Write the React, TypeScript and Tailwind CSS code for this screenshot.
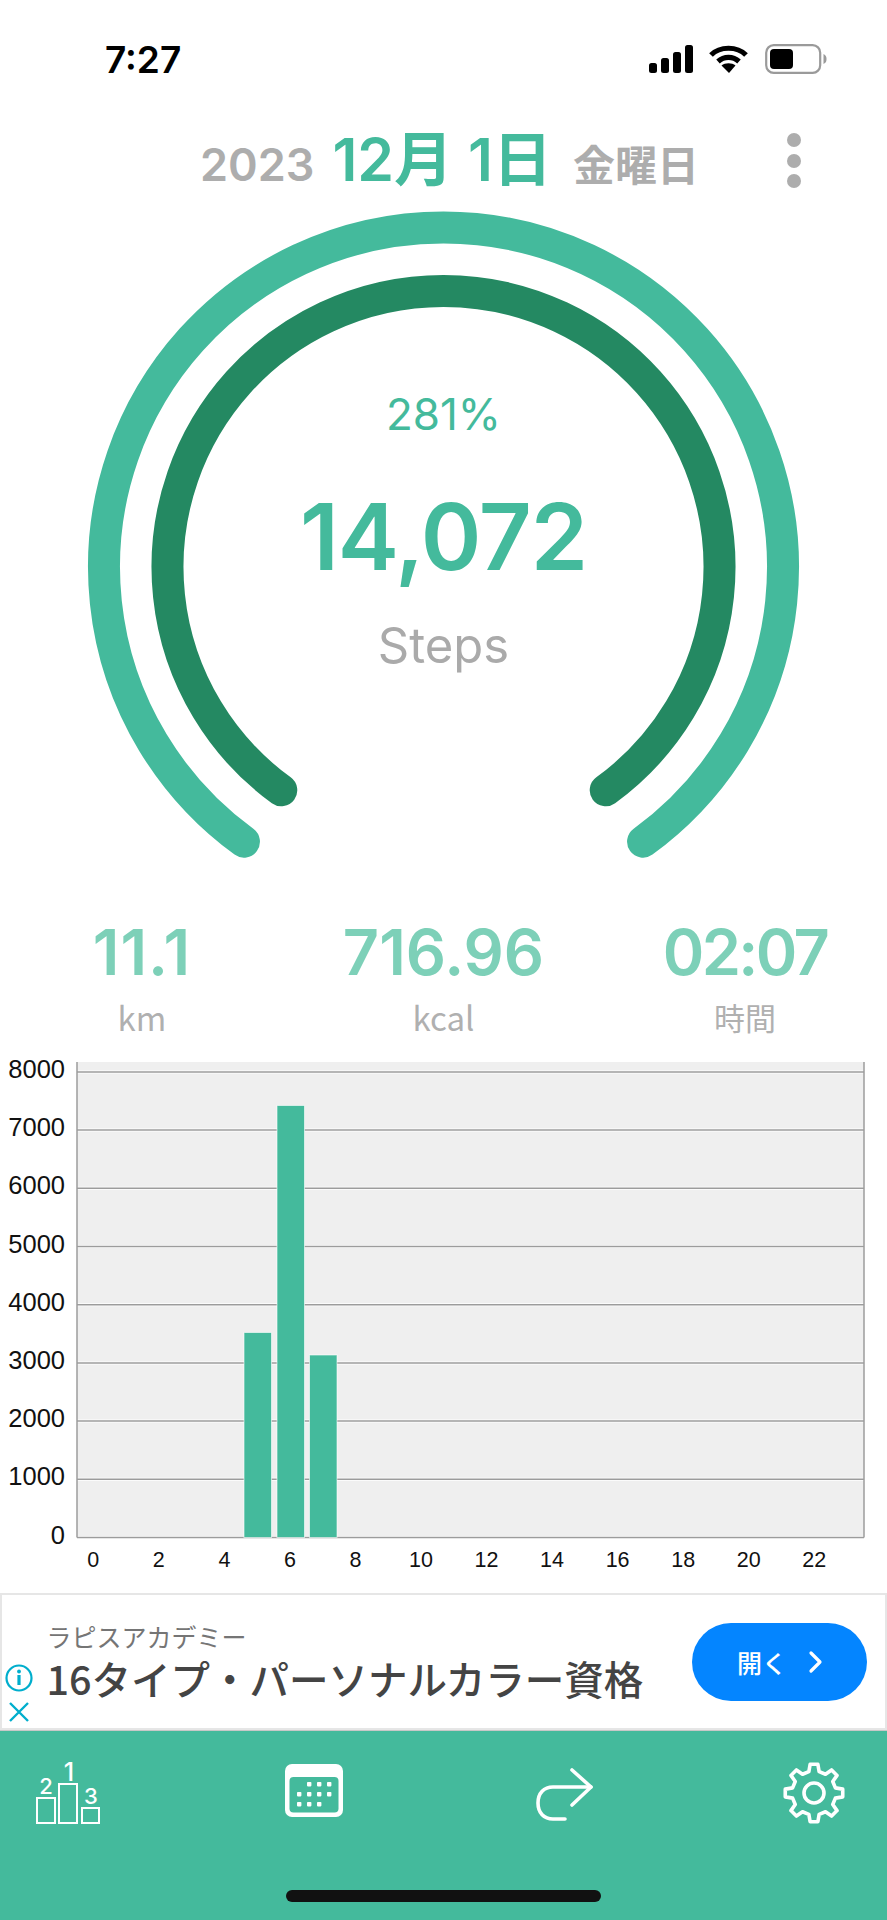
import React from "react";

const inter = "font-['Inter','Noto_Sans_CJK_JP',sans-serif]";
const jp = "font-['Noto_Sans_CJK_JP','Inter',sans-serif]";

function polar(r: number, deg: number) {
  const a = (deg * Math.PI) / 180;
  return [443.5 + r * Math.sin(a), 362 - r * Math.cos(a)];
}

function Arc({ r, color }: { r: number; color: string }) {
  const [x1, y1] = polar(r, -144);
  const [x2, y2] = polar(r, 144);
  return (
    <path
      d={`M${x1} ${y1} A${r} ${r} 0 1 1 ${x2} ${y2}`}
      fill="none"
      stroke={color}
      strokeWidth={32}
      strokeLinecap="round"
    />
  );
}

function Gauge() {
  return (
    <div className="relative h-[670px] w-full">
      <svg width={887} height={670} className="block">
        <Arc r={339.5} color="#44ba9c" />
        <Arc r={276} color="#248962" />
      </svg>
      <div className={`absolute left-0 right-0 top-[182px] flex flex-col items-center ${inter}`}>
        <div className="h-[54px] text-[44px] leading-[54px] text-[#44ba9c]">281%</div>
        <div className="mt-[41px] h-[110px] text-[92px] font-semibold leading-[110px] tracking-[-1px] text-[#44ba9c]">14,072</div>
        <div className="mt-[24px] h-[60px] text-[49px] leading-[60px] text-[#aaaaaa]">Steps</div>
      </div>
    </div>
  );
}

function Stat({ value, label, track, labelSize }: { value: string; label: string; track: string; labelSize: string }) {
  return (
    <div className="flex w-[260px] flex-col items-center">
      <div className={`h-[70px] text-[63px] font-semibold leading-[70px] text-[#7dd0b8] ${track} ${inter}`}>{value}</div>
      <div className={`mt-[8.5px] h-[44px] leading-[44px] text-[#b0b0b0] ${labelSize} ${jp}`}>{label}</div>
    </div>
  );
}

const font = "'Liberation Sans', Arial, sans-serif";

function Chart() {
  const left = 77;
  const right = 864;
  const base = 489.5;
  const unit = 58.2;
  const top = 14;
  const lines = [0, 1, 2, 3, 4, 5, 6, 7, 8];
  const xs = Array.from({ length: 12 }, (_, i) => i * 2);
  const bars = [
    { x: 244, top: 284.5 },
    { x: 277, top: 57.5 },
    { x: 309.5, top: 307 },
  ];
  return (
    <svg width={887} height={545} className="block">
      <rect x={left} y={top} width={right - left} height={base - top} fill="#efefef" />
      {lines.map((n) => (
        <g key={n}>
          <line x1={left} x2={right} y1={base - n * unit} y2={base - n * unit} stroke="#ffffff" strokeWidth={3} />
          <line x1={left} x2={right} y1={base - n * unit} y2={base - n * unit} stroke="#9c9c9c" strokeWidth={1.5} />
          <text x={65} y={base - n * unit + 6} textAnchor="end" fontFamily={font} fontSize={25.5} fill="#111">
            {n * 1000}
          </text>
        </g>
      ))}
      <line x1={left} x2={left} y1={top} y2={base} stroke="#9c9c9c" strokeWidth={1.5} />
      <line x1={right} x2={right} y1={top} y2={base} stroke="#9c9c9c" strokeWidth={1.5} />
      {bars.map((b) => (
        <rect key={b.x} x={b.x} y={b.top} width={27.5} height={base - b.top} fill="#44ba9c" stroke="#ffffff" strokeOpacity={0.6} strokeWidth={1} />
      ))}
      {xs.map((n) => (
        <text key={n} x={93.3 + n * 32.77} y={519} textAnchor="middle" fontFamily={font} fontSize={21.5} fill="#111">
          {n}
        </text>
      ))}
    </svg>
  );
}

function AdMarks() {
  return (
    <svg width={36} height={70} viewBox="0 0 36 70" className="mb-[6px] block">
      <circle cx={17} cy={26} r={12.5} fill="none" stroke="#00aecd" strokeWidth={2.2} />
      <circle cx={17} cy={19.5} r={1.9} fill="#00aecd" />
      <rect x={15.4} y={23} width={3.2} height={10} fill="#00aecd" />
      <path d="M8 51 L26 69 M26 51 L8 69" stroke="#00aecd" strokeWidth={2.4} fill="none" />
    </svg>
  );
}

function Ad() {
  return (
    <div className="flex h-[137px] w-full border-2 border-[#e6e6e6] bg-white">
      <div className="flex w-[44.5px] shrink-0 flex-col justify-end">
        <AdMarks />
      </div>
      <div className={`flex-1 pt-[25px] ${jp}`}>
        <div className="h-[33px] text-[25px] leading-[33px] text-[#757575]">ラピスアカデミー</div>
        <div className="whitespace-nowrap text-[39.5px] font-medium leading-[50px] text-[#444444]">16タイプ・パーソナルカラー資格</div>
      </div>
      <div className="mr-[18px] mt-[28px] flex h-[78px] w-[175px] items-center rounded-full bg-[#0485ff] pl-[45px]">
        <span className={`text-[25px] font-medium leading-none text-white ${jp}`}>開く</span>
        <svg width={16} height={24} viewBox="0 0 16 24" className="ml-[21px]">
          <path d="M3 3 L12 12 L3 21" fill="none" stroke="#ffffff" strokeWidth={3.2} strokeLinecap="round" strokeLinejoin="round" />
        </svg>
      </div>
    </div>
  );
}

function Podium() {
  return (
    <svg width={66} height={70} viewBox="0 -6 66 70" className="mt-[-6px] block">
      <g fill="none" stroke="#ffffff" strokeWidth={2}>
        <rect x={2} y={37} width={18} height={25} />
        <rect x={24} y={23} width={18} height={39} />
        <rect x={47} y={47} width={17} height={15} />
      </g>
      <g fill="#ffffff" fontFamily="Inter, sans-serif" fontWeight={500} textAnchor="middle">
        <text x={34} y={20} fontSize={25}>1</text>
        <text x={11} y={33} fontSize={22}>2</text>
        <text x={56} y={43} fontSize={22}>3</text>
      </g>
    </svg>
  );
}

function CalendarIcon() {
  const dots: [number, number][] = [
    [24, 20], [34, 20], [44, 20],
    [14, 30], [24, 30], [34, 30], [44, 30],
    [14, 40], [24, 40], [34, 40],
  ];
  return (
    <svg width={58} height={53} viewBox="0 0 58 53" className="block">
      <rect x={0} y={0} width={58} height={53} rx={7} fill="#ffffff" />
      <rect x={4.5} y={13} width={49} height={35.5} rx={4} fill="#44ba9c" />
      {dots.map(([x, y]) => (
        <rect key={`${x}-${y}`} x={x - 2} y={y - 2} width={4.4} height={4.4} rx={0.8} fill="#ffffff" />
      ))}
    </svg>
  );
}

function ShareIcon() {
  return (
    <svg width={60} height={56} viewBox="0 0 60 56" className="block" fill="none" stroke="#ffffff" strokeWidth={3.6} strokeLinecap="round" strokeLinejoin="round">
      <path d="M36 2 L55 19 L36 37" />
      <path d="M55 19 H17 C8 19 2 25 2 35 C2 45 8 51 17 51 H29" />
    </svg>
  );
}

function gearPath() {
  const teeth = 8;
  const pts: string[] = [];
  const cx = 32;
  const cy = 32;
  const ro = 29;
  const ri = 22;
  for (let i = 0; i < teeth; i++) {
    const step = 360 / teeth;
    const c = i * step;
    const seq: [number, number][] = [
      [ri, c - step * 0.3],
      [ro, c - step * 0.17],
      [ro, c + step * 0.17],
      [ri, c + step * 0.3],
    ];
    seq.forEach(([r, d]) => {
      const a = ((d - 90) * Math.PI) / 180;
      pts.push(`${(cx + r * Math.cos(a)).toFixed(2)} ${(cy + r * Math.sin(a)).toFixed(2)}`);
    });
  }
  return `M${pts.join(" L")} Z`;
}

function GearIcon() {
  return (
    <svg width={64} height={64} viewBox="0 0 64 64" className="block" fill="none" stroke="#ffffff" strokeWidth={3.6} strokeLinejoin="round">
      <path d={gearPath()} />
      <circle cx={32} cy={32} r={10} />
    </svg>
  );
}

function StatusIcons() {
  return (
    <div className="flex items-center">
      <svg width={46} height={28} viewBox="0 0 46 28" fill="#000">
        <rect x={1} y={18} width={8} height={10} rx={2.5} />
        <rect x={13} y={13} width={8} height={15} rx={2.5} />
        <rect x={25} y={7} width={8} height={21} rx={2.5} />
        <rect x={37} y={0} width={8} height={28} rx={2.5} />
      </svg>
      <svg width={40} height={28} viewBox="0 0 40 28" className="ml-[15px]" fill="none" stroke="#000" strokeWidth={5.2}>
        <path d="M2 10 C11 1 28 1 37 10" />
        <path d="M9 16.5 C15 11 24 11 30 16.5" />
        <path d="M20 28 L12.5 20.5 C16 17.5 23 17.5 26.5 20.5 Z" fill="#000" stroke="none" />
      </svg>
      <svg width={62} height={30} viewBox="0 0 62 30" className="ml-[16px]">
        <rect x={1.2} y={1.2} width={54} height={27.6} rx={7.5} fill="#fff" stroke="#9a9a9a" strokeWidth={2.2} />
        <rect x={5} y={5} width={23} height={20} rx={4} fill="#000" />
        <path d="M58.5 10 C61 11 61.5 13 61.5 15 C61.5 17 61 19 58.5 20 Z" fill="#9a9a9a" />
      </svg>
    </div>
  );
}

export default function App() {
  return (
    <div className="relative flex h-[1920px] w-[887px] flex-col overflow-hidden bg-white">
      <div className="flex h-[110px] items-start justify-between pl-[105px] pr-[60px] pt-[38px]">
        <span className={`text-[37px] font-semibold leading-[44px] text-black ${inter}`}>7:27</span>
        <div className="pt-[6px]">
          <StatusIcons />
        </div>
      </div>

      <div className="relative flex h-[95px] items-baseline pl-[200px] pt-[20px]">
        <span className={`text-[45px] font-semibold leading-[60px] text-[#adadad] ${inter}`}>2023</span>
        <span className={`ml-[18px] text-[59px] font-semibold leading-[60px] text-[#44ba9c] ${inter}`}>12月 1日</span>
        <span className={`ml-[21px] text-[42px] font-bold leading-[60px] text-[#adadad] ${jp}`}>金曜日</span>
        <div className="absolute left-[787px] top-[23px] flex flex-col gap-[6.5px]">
          <div className="h-[14px] w-[14px] rounded-full bg-[#adadad]" />
          <div className="h-[14px] w-[14px] rounded-full bg-[#adadad]" />
          <div className="h-[14px] w-[14px] rounded-full bg-[#adadad]" />
        </div>
      </div>

      <Gauge />

      <div className="flex h-[173px] justify-center gap-[41.5px] pt-[41.5px]">
        <Stat value="11.1" label="km" track="tracking-[1px]" labelSize="text-[33px]" />
        <Stat value="716.96" label="kcal" track="tracking-normal" labelSize="text-[33px]" />
        <Stat value="02:07" label="時間" track="tracking-[-2.6px]" labelSize="text-[31px]" />
      </div>

      <Chart />

      <Ad />

      <div className="relative flex-1 border-t border-[#c8c8c8] bg-[#44ba9c]">
        <div className="flex h-[110px] items-start pl-[35px] pt-[30px]">
          <Podium />
          <div className="ml-[184px] pt-[3px]"><CalendarIcon /></div>
          <div className="ml-[193px] pt-[7px]"><ShareIcon /></div>
          <div className="ml-[186px]"><GearIcon /></div>
        </div>
        <div className="mx-auto mt-[49px] h-[12px] w-[315px] rounded-full bg-[#111111]" />
      </div>
    </div>
  );
}
